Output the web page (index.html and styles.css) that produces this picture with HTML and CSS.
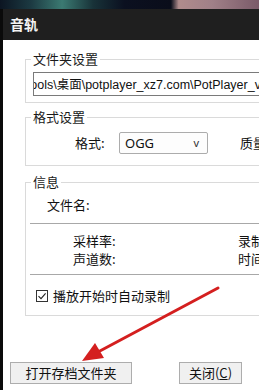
FILE: index.html
```html
<!DOCTYPE html>
<html lang="zh-CN">
<head>
  <meta charset="UTF-8" />
  <meta name="viewport" content="width=device-width, initial-scale=1.0"/>
  <title>音轨</title>
  <link rel="stylesheet" href="styles.css">
</head>
<body>
  <div class="photo"></div>

  <div class="window">
    <div class="titlebar">音轨</div>

    <div class="content">
      <fieldset class="group group-folder">
        <legend>文件夹设置</legend>
        <div class="path-field">
          <span class="path-text">Tools\桌面\potplayer_xz7.com\PotPlayer_v1.7.21</span>
        </div>
      </fieldset>

      <fieldset class="group group-format">
        <legend>格式设置</legend>
        <div class="format-row">
          <span class="format-label">格式:</span>
          <div class="select">
            <span>OGG</span>
            <span class="caret">v</span>
          </div>
          <span class="format-label">质量</span>
        </div>
      </fieldset>

      <fieldset class="group group-info">
        <legend>信息</legend>
        <div class="info-file">文件名:</div>
        <div class="rule"></div>
        <div class="info-grid">
          <span>采样率:</span><span>录制</span>
          <span>声道数:</span><span>时间</span>
        </div>
        <div class="rule"></div>
        <label class="auto-rec">
          <span class="check">
            <svg viewBox="0 0 10 10" width="10" height="10">
              <path d="M1.5 5.2 L4 7.6 L8.6 2.4" fill="none" stroke="#222" stroke-width="1.1"/>
            </svg>
          </span>
          播放开始时自动录制
        </label>
      </fieldset>

      <div class="actions">
        <button class="btn btn-open">打开存档文件夹</button>
        <button class="btn btn-close">关闭(<u>C</u>)</button>
      </div>
    </div>
  </div>

  <!-- red annotation arrow drawn over the dialog -->
  <svg class="arrow" viewBox="0 0 259 390" width="259" height="390">
    <line x1="218" y1="288" x2="98" y2="352" stroke="#d41f1f" stroke-width="3" stroke-linecap="round"/>
    <polygon points="82,361 95,343 104,358" fill="#d41f1f"/>
  </svg>
</body>
</html>
```

FILE: styles.css
```css
* {
  margin: 0;
  padding: 0;
  box-sizing: border-box;
}

body {
  width: 259px;
  height: 390px;
  overflow: hidden;
  position: relative;
  background-color: #0a0a0a;
  font-family: "Noto Sans CJK SC", "Noto Sans", sans-serif;
  font-size: 13px;
  line-height: 16px;
  color: #111;
}

.photo {
  height: 9px;
  background: linear-gradient(to right, #0c1522 0, #1c3a42 12%, #3b7a72 24%, #183238 36%, #0b1020 48%, #0a0d1a 66%, #b08c8c 69%, #a08088 82%, #7a5a68 100%);
}

.window {
  margin-left: 3px;
}

.titlebar {
  height: 31px;
  background-color: #1f1f1f;
  color: #f2f2f2;
  font-size: 14px;
  font-weight: 700;
  line-height: 31px;
  padding-left: 7px;
}

.content {
  background-color: #ffffff;
  height: 350px;
  padding-top: 11px;
}

/* group boxes */
.group {
  border: 1px solid #dadada;
  margin-left: 22px;
  width: 300px;
  min-width: 0;
  padding: 0;
}

.group legend {
  margin-left: 5px;
  padding: 0 2px;
  line-height: 16px;
  color: #1a1a1a;
}

.group-format {
  margin-top: 6px;
}

.group-info {
  margin-top: 8px;
}

.path-field {
  margin: 5px 0 6px 7px;
  height: 24px;
  border: 1px solid #7a7a7a;
  overflow: hidden;
  white-space: nowrap;
  line-height: 22px;
}

.path-text {
  display: inline-block;
  margin-left: -10px;
  font-family: "Liberation Sans", "Noto Sans CJK SC", sans-serif;
  font-size: 12.5px;
}

.format-row {
  display: flex;
  align-items: center;
  margin: 7px 0 11px 49px;
}

.format-label {
  width: 44px;
}

.select {
  width: 89px;
  height: 22px;
  margin-right: 32px;
  border: 1px solid #acacac;
  border-radius: 2px;
  background-color: #fdfdfd;
  display: flex;
  align-items: center;
  justify-content: space-between;
  padding: 0 8px 0 5px;
  font-family: "Noto Sans", sans-serif;
}

.caret {
  font-size: 11px;
  color: #333;
}

.info-file {
  margin-top: 7px;
  padding-left: 21px;
}

.rule {
  height: 1px;
  margin: 10px 0 0 4px;
  background-color: #a8a8a8;
}

.info-grid {
  display: grid;
  grid-template-columns: 165px auto;
  row-gap: 2px;
  margin-top: 9px;
  padding-left: 47px;
}

.info-grid + .rule {
  margin-top: 7px;
}

.auto-rec {
  display: flex;
  align-items: center;
  gap: 5px;
  margin: 13px 0 11px 10px;
}

.check {
  width: 12px;
  height: 12px;
  border: 1px solid #333;
  display: flex;
  align-items: center;
  justify-content: center;
}

/* bottom buttons */
.actions {
  display: flex;
  gap: 47px;
  margin-top: 46px;
  padding-left: 7px;
}

.btn {
  height: 22px;
  border: 1px solid #adadad;
  background-color: #f0f0f0;
  font-family: "Noto Sans CJK SC", sans-serif;
  font-size: 13px;
  line-height: 18px;
  color: #111;
}

.btn u {
  text-decoration-thickness: 1px;
}

.btn-open {
  width: 122px;
}

.btn-close {
  width: 63px;
}

.arrow {
  position: absolute;
  top: 0;
  left: 0;
  pointer-events: none;
}
```
